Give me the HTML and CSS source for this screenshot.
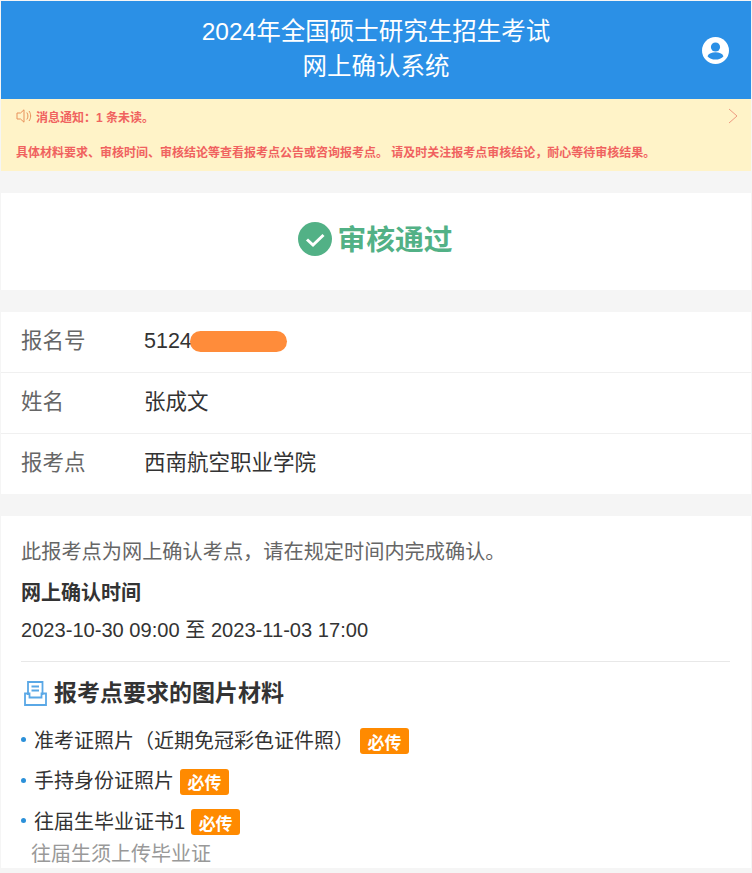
FILE: index.html
```html
<!DOCTYPE html>
<html lang="zh-CN">
<head>
    <meta charset="UTF-8">
    <meta name="viewport" content="width=device-width, initial-scale=1.0">
    <title>网上确认系统</title>
    <link rel="stylesheet" href="styles.css">
</head>
<body>
    <header class="header">
        <h1 class="header-title">2024年全国硕士研究生招生考试<br>网上确认系统</h1>
        <svg class="user-icon" viewBox="0 0 27 27" width="27" height="27">
            <circle cx="13.5" cy="13.5" r="13.5" fill="#fff"/>
            <circle cx="13.5" cy="10" r="4.6" fill="#2b90e6"/>
            <path d="M5.5 19.2c1.2-3 4.4-4 8-4s6.800 1 8 4c-1.800 2.200-4.800 3.400-8 3.400s-6.200-1.200-8-3.400z" fill="#2b90e6"/>
        </svg>
    </header>

    <section class="notice">
        <div class="notice-top">
            <svg class="notice-icon" viewBox="0 0 16 14" width="16" height="14">
                <path d="M1 4h3.500L8 .8v12.400L4.500 10H1z" fill="none" stroke="#e8915a" stroke-width="1"/>
                <path d="M10.800 3.500c1.500 2 1.500 5 0 7M13 2c2.200 3 2.200 7 0 10" fill="none" stroke="#e8915a" stroke-width="1"/>
            </svg>
            <span>消息通知：1 条未读。</span>
            <svg class="notice-arrow" viewBox="0 0 10 16" width="10" height="16">
                <path d="M1 1l8 7-8 7" fill="none" stroke="#ee9a80" stroke-width="1"/>
            </svg>
        </div>
        <p class="notice-text">具体材料要求、审核时间、审核结论等查看报考点公告或咨询报考点。 请及时关注报考点审核结论，耐心等待审核结果。</p>
    </section>

    <section class="card status">
        <svg viewBox="0 0 34 34" width="34" height="34">
            <circle cx="17" cy="17" r="17" fill="#52b186"/>
            <path d="M9 17.500l6 5.500 10.500-10" fill="none" stroke="#fff" stroke-width="3"/>
        </svg>
        <span class="status-text">审核通过</span>
    </section>

    <section class="card info">
        <div class="info-row">
            <span class="info-label">报名号</span>
            <span class="info-value">5124<i class="mask"></i></span>
        </div>
        <div class="info-row">
            <span class="info-label">姓名</span>
            <span class="info-value">张成文</span>
        </div>
        <div class="info-row">
            <span class="info-label">报考点</span>
            <span class="info-value">西南航空职业学院</span>
        </div>
    </section>

    <section class="card detail">
        <p class="detail-tip">此报考点为网上确认考点，请在规定时间内完成确认。</p>
        <h3 class="detail-sub">网上确认时间</h3>
        <p class="detail-time">2023-10-30 09:00 至 2023-11-03 17:00</p>
        <div class="material">
            <h2 class="material-title">
                <svg viewBox="0 0 23 25" width="23" height="25">
                    <path d="M4 14V1h14.500v13" fill="none" stroke="#5aa8e6" stroke-width="1.800"/>
                    <path d="M7.500 5.500h7.500M7.500 9.500h7.500" stroke="#5aa8e6" stroke-width="1.800"/>
                    <path d="M1 12.500V24h21V12.500h-4.500v4h-12v-4z" fill="none" stroke="#5aa8e6" stroke-width="1.800"/>
                </svg>
                报考点要求的图片材料
            </h2>
            <ul class="material-list">
                <li>准考证照片（近期免冠彩色证件照）<span class="tag">必传</span></li>
                <li>手持身份证照片<span class="tag">必传</span></li>
                <li>往届生毕业证书1<span class="tag">必传</span></li>
            </ul>
            <p class="material-note">往届生须上传毕业证</p>
        </div>
    </section>
</body>
</html>
```

FILE: styles.css
```css
html {
    box-sizing: border-box;
    font-family: "Liberation Sans", "Noto Sans CJK SC", sans-serif;
    font-size: 16px;
}

*,
*:before,
*:after {
    box-sizing: inherit;
}

body {
    margin: 0;
    height: 873px;
    overflow: hidden;
    padding: 1px 1px 0;
    background-color: #f5f5f5;
    color: #333;
}

.header {
    position: relative;
    height: 98px;
    padding-bottom: 2px;
    display: flex;
    justify-content: center;
    align-items: center;
    background-color: #2b90e6;
}

.header-title {
    margin: 0;
    font-size: 24.5px;
    font-weight: 400;
    line-height: 35px;
    text-align: center;
    color: #fff;
}

.user-icon {
    position: absolute;
    top: 36px;
    right: 22px;
}

.notice {
    height: 72px;
    padding: 0 15px;
    background-color: #fff3c8;
    color: #f0625f;
    font-size: 12px;
    font-weight: 700;
}

.notice-top {
    height: 34px;
    display: flex;
    align-items: center;
}

.notice-icon {
    margin-right: 4px;
}

.notice-arrow {
    margin-left: auto;
    margin-right: -2px;
}

.notice-text {
    margin: 0;
    padding-top: 12px;
    line-height: 16px;
    white-space: nowrap;
}

.card {
    margin-top: 22px;
    background-color: #fff;
}

.status {
    height: 97px;
    padding-bottom: 5px;
    padding-right: 1px;
    display: flex;
    justify-content: center;
    align-items: center;
    gap: 5px;
    color: #52b186;
    font-size: 28.800px;
    font-weight: 700;
}

.status-text {
    padding-bottom: 4px;
}

.info-row {
    height: 61px;
    padding-left: 20px;
    padding-bottom: 2px;
    display: flex;
    align-items: center;
    border-bottom: 1px solid #f0f0f0;
    font-size: 21.500px;
    line-height: 24px;
}

.info-row:last-child {
    height: 60px;
    border-bottom: 0;
}

.info-label {
    width: 123px;
    color: #666;
}

.info-value {
    display: flex;
    align-items: center;
    color: #333;
}

.mask {
    width: 97px;
    height: 21px;
    margin-left: -2px;
    border-radius: 11px;
    background-color: #ff8c3a;
}

.detail {
    height: 352px;
    padding: 23px 21px 0 20px;
    font-size: 20.200px;
}

.detail-tip {
    margin: 0;
    line-height: 26px;
    color: #666;
}

.detail-sub {
    margin: 15px 0 0;
    font-size: 20px;
    line-height: 26px;
    color: #333;
}

.detail-time {
    margin: 11px 0 0;
    font-size: 20.100px;
    line-height: 26px;
    color: #333;
}

.material {
    margin-top: 18px;
    border-top: 1px solid #e8e8e8;
}

.material-title {
    margin: 18px 0 0 3px;
    display: flex;
    align-items: center;
    gap: 7px;
    font-size: 23px;
    line-height: 26px;
    color: #333;
}

.material-list {
    margin: 13px 0 0;
    padding: 0;
    list-style: none;
}

.material-list li {
    position: relative;
    height: 40.500px;
    padding-left: 13px;
    display: flex;
    align-items: center;
    font-size: 20px;
}

.material-list li:before {
    content: "";
    position: absolute;
    left: 0;
    top: 18px;
    width: 5px;
    height: 5px;
    border-radius: 50%;
    background-color: #2b90d9;
}

.tag {
    margin-left: 6px;
    margin-top: 4px;
    width: 49px;
    height: 26px;
    display: flex;
    justify-content: center;
    align-items: center;
    border-radius: 3px;
    background-color: #ff8a00;
    color: #fff;
    font-size: 17px;
    font-weight: 700;
}

.material-note {
    margin: 1px 0 0;
    padding-left: 10px;
    font-size: 20px;
    line-height: 24px;
    color: #999;
}
```
